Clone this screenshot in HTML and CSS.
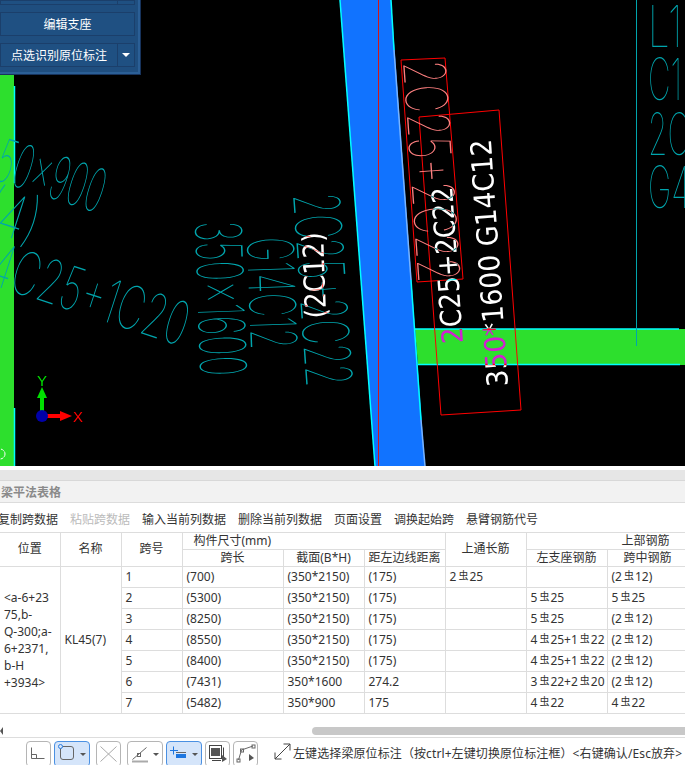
FILE: index.html
```html
<!DOCTYPE html>
<html lang="zh">
<head>
<meta charset="utf-8">
<title>梁平法表格</title>
<link rel="stylesheet" href="styles.css">
</head>
<body>
<div class="canvas">
  <svg class="drawing" width="685" height="466" viewBox="0 0 685 466">
    <rect class="green" x="0" y="60" width="14" height="406"/>
    <polygon class="green" points="415,329 685,329 685,365 418,365"/>
    <polygon class="beam" points="340,0 391,0 425,466 375,466"/>
    <line class="edge-cyan" x1="340" y1="0" x2="375" y2="466"/>
    <line class="edge-cyan" x1="391" y1="0" x2="394" y2="50"/>
    <line class="edge-light" x1="394" y1="50" x2="411" y2="280"/>
    <line class="edge-cyan" x1="411" y1="280" x2="421" y2="420"/>
    <line class="edge-light" x1="421" y1="420" x2="425" y2="466"/>
    <line class="red-line" x1="378.500" y1="0" x2="378.500" y2="466"/>
    <line class="edge-cyan" x1="14.500" y1="86" x2="14.500" y2="183"/>
    <line class="edge-cyan" x1="14.500" y1="408" x2="14.500" y2="466"/>
    <line class="edge-cyan" x1="415" y1="329" x2="679" y2="329"/>
    <line class="edge-cyan" x1="418" y1="364.500" x2="680" y2="364.500"/>
    <line class="cad-line" x1="636.500" y1="0" x2="636.500" y2="346"/>

    <text class="cad" font-size="58" x="648" y="47" textLength="34" lengthAdjust="spacingAndGlyphs">L1</text>
    <text class="cad" font-size="58" x="648" y="100" textLength="34" lengthAdjust="spacingAndGlyphs">C1</text>
    <text class="cad" font-size="58" x="648" y="155" textLength="42" lengthAdjust="spacingAndGlyphs">2C</text>
    <text class="cad" font-size="58" x="648" y="208" textLength="42" lengthAdjust="spacingAndGlyphs">G4</text>

    <text class="cad" font-size="60" transform="translate(-26,173) rotate(18)" textLength="130" lengthAdjust="spacingAndGlyphs">350x900</text>
    <text class="cad" font-size="60" transform="translate(-20,228) rotate(18)" textLength="55" lengthAdjust="spacingAndGlyphs">(4)</text>
    <text class="cad" font-size="60" transform="translate(-14,283) rotate(18)" textLength="205" lengthAdjust="spacingAndGlyphs">4C25+1C20</text>

    <text class="cad" font-size="64" transform="translate(195,222) rotate(88)" textLength="155" lengthAdjust="spacingAndGlyphs">350x1600</text>
    <text class="cad" font-size="64" transform="translate(247,238) rotate(88)" textLength="112" lengthAdjust="spacingAndGlyphs">G14C12</text>
    <text class="cad" font-size="64" transform="translate(293,195) rotate(86)" textLength="193" lengthAdjust="spacingAndGlyphs">2C25+2C22</text>

    <polygon class="box" points="401,60 445,58 463,279 417,282"/>
    <polygon class="box" points="419,117 499,110 521,410 441,415"/>
    <text class="cad cad-pink" font-size="58" transform="translate(403,62) rotate(86)" textLength="222" lengthAdjust="spacingAndGlyphs">2C25+2C22</text>

    <text class="note" font-size="29" transform="translate(326,318) rotate(-92)" textLength="86" lengthAdjust="spacingAndGlyphs">(2C12)</text>
    <text class="note" font-size="29" transform="translate(463,343) rotate(-94)" textLength="157" lengthAdjust="spacingAndGlyphs">2C25+2C22</text>
    <text class="note" font-size="29" transform="translate(508,386) rotate(-94)" textLength="248" lengthAdjust="spacingAndGlyphs">350*1600 G14C12</text>

    <rect class="axis-y" x="40" y="396" width="4" height="20"/>
    <polygon class="axis-y" points="42,387 47,398 37,398"/>
    <rect class="axis-x" x="42" y="414" width="20" height="4"/>
    <polygon class="axis-x" points="72,416 60,411 60,421"/>
    <circle class="axis-o" cx="42" cy="416" r="6"/>
    <text class="axis-label-y" font-size="15" x="37" y="386">Y</text>
    <text class="axis-label-x" font-size="15" x="73" y="422">X</text>
    <circle class="snap" cx="0" cy="454" r="5"/>
  </svg>

  <div class="panel">
    <div class="panel-row panel-stub"><span class="panel-btn"></span><span class="panel-drop"></span></div>
    <div class="panel-row"><span class="panel-btn panel-wide">编辑支座</span></div>
    <div class="panel-row"><span class="panel-btn">点选识别原位标注</span><span class="panel-drop"><i class="caret-white"></i></span></div>
  </div>
</div>

<div class="sheet">
  <div class="band"></div>
  <div class="title">梁平法表格</div>
  <div class="tools">
    <span>复制跨数据</span>
    <span class="off">粘贴跨数据</span>
    <span>输入当前列数据</span>
    <span>删除当前列数据</span>
    <span>页面设置</span>
    <span>调换起始跨</span>
    <span>悬臂钢筋代号</span>
  </div>

  <div class="table-wrap">
    <table class="grid">
      <colgroup>
        <col class="c60"><col class="c61"><col class="c61"><col class="c101"><col class="c81"><col class="c81"><col class="c81"><col class="c81"><col class="c81"><col class="c77">
      </colgroup>
      <thead>
        <tr>
          <th rowspan="2">位置</th>
          <th rowspan="2">名称</th>
          <th rowspan="2">跨号</th>
          <th colspan="3" class="th-left">构件尺寸(mm)</th>
          <th rowspan="2">上通长筋</th>
          <th colspan="3">上部钢筋</th>
        </tr>
        <tr>
          <th>跨长</th>
          <th>截面(B*H)</th>
          <th>距左边线距离</th>
          <th>左支座钢筋</th>
          <th>跨中钢筋</th>
          <th>右支座钢筋</th>
        </tr>
      </thead>
      <tbody>
        <tr><td rowspan="7" class="pos">&lt;a-6+23<br>75,b-<br>Q-300;a-<br>6+2371,<br>b-H<br>+3934&gt;</td><td rowspan="7">KL45(7)</td><td>1</td><td>(700)</td><td>(350*2150)</td><td>(175)</td><td>2<b class="rb">虫</b>25</td><td></td><td>(2<b class="rb">虫</b>12)</td><td></td></tr>
        <tr><td>2</td><td>(5300)</td><td>(350*2150)</td><td>(175)</td><td></td><td>5<b class="rb">虫</b>25</td><td>5<b class="rb">虫</b>25</td><td></td></tr>
        <tr><td>3</td><td>(8250)</td><td>(350*2150)</td><td>(175)</td><td></td><td>5<b class="rb">虫</b>25</td><td>(2<b class="rb">虫</b>12)</td><td></td></tr>
        <tr><td>4</td><td>(8550)</td><td>(350*2150)</td><td>(175)</td><td></td><td>4<b class="rb">虫</b>25+1<b class="rb">虫</b>22</td><td>(2<b class="rb">虫</b>12)</td><td></td></tr>
        <tr><td>5</td><td>(8400)</td><td>(350*2150)</td><td>(175)</td><td></td><td>4<b class="rb">虫</b>25+1<b class="rb">虫</b>22</td><td>(2<b class="rb">虫</b>12)</td><td></td></tr>
        <tr><td>6</td><td>(7431)</td><td>350*1600</td><td>274.2</td><td></td><td>3<b class="rb">虫</b>22+2<b class="rb">虫</b>20</td><td>(2<b class="rb">虫</b>12)</td><td></td></tr>
        <tr><td>7</td><td>(5482)</td><td>350*900</td><td>175</td><td></td><td>4<b class="rb">虫</b>22</td><td>4<b class="rb">虫</b>22</td><td></td></tr>
      </tbody>
    </table>
  </div>

  <div class="scrollbar"><i class="scroll-left"></i><i class="scroll-thumb"></i></div>

  <div class="status">
    <span class="sb">
      <svg width="23" height="24" viewBox="0 0 23 24"><path class="ic" d="M4.500 5.500V16.500H17.500M4.500 12.500H9.500V16.500"/></svg>
    </span>
    <span class="sb sb-wide sb-on">
      <svg width="23" height="24" viewBox="0 0 23 24"><rect class="ic" x="5.500" y="4.500" width="13" height="13" rx="2.500"/><circle class="ic-blue" cx="5.500" cy="4.500" r="2"/></svg>
      <i class="caret"></i>
    </span>
    <span class="sb sb-off">
      <svg width="23" height="24" viewBox="0 0 23 24"><path class="ic-gray" d="M3.500 4.500L19.500 19.500M19.500 4.500L3.500 19.500"/></svg>
    </span>
    <span class="sb sb-wide">
      <svg width="23" height="24" viewBox="0 0 23 24"><path class="ic" d="M4.500 17.500L18.500 5.500"/><rect class="ic" x="9.500" y="11.500" width="3" height="3"/><path class="ic-bar" d="M4 19.500H20"/></svg>
      <i class="caret"></i>
    </span>
    <span class="sb sb-wide sb-on">
      <svg width="23" height="24" viewBox="0 0 23 24"><path class="ic-blue-line" d="M3 8.500H11M6.500 4.500V12.500"/><rect class="ic-blue-fill" x="9" y="12" width="10" height="4"/><path class="ic" d="M9 10.500H19"/></svg>
      <i class="caret"></i>
    </span>
    <span class="sb">
      <svg width="23" height="24" viewBox="0 0 23 24"><rect class="ic-dark" x="3.500" y="3.500" width="12" height="13"/><rect class="ic-dark-fill" x="5" y="6" width="9" height="8"/><path class="ic-dark" d="M17.500 5.500V16M6 18.500H15"/><polygon class="ic-tri" points="16,13 21,17 16,20"/></svg>
    </span>
    <span class="sb">
      <svg width="23" height="24" viewBox="0 0 23 24"><path class="ic" d="M4.500 18L7.500 8L19 4"/><rect class="ic" x="3" y="17" width="3" height="3"/><rect class="ic" x="6.500" y="7" width="3" height="3"/><rect class="ic" x="18" y="3" width="3" height="3"/><polygon class="ic-tri" points="15,12 20,16 15,19"/></svg>
    </span>
    <svg class="expand" width="17" height="17" viewBox="0 0 17 17"><path class="ic-dark" d="M1 16L16 1M9.500 1H16V7.500M1 9.500V16H7.500"/></svg>
    <span class="hint">左键选择梁原位标注（按ctrl+左键切换原位标注框）&lt;右键确认/Esc放弃&gt;</span>
  </div>
</div>
</body>
</html>
```
FILE: styles.css
```css
* { box-sizing: border-box; }
html, body { margin: 0; padding: 0; height: 765px; overflow: hidden; background: #fff; }
body { width: 685px; font-family: "Noto Sans", "Noto Sans CJK SC", sans-serif; font-size: 12px; color: #333; }

/* CAD canvas */
.canvas { position: relative; height: 466px; background: #000; overflow: hidden; isolation: isolate; }
.drawing { display: block; }
.green { fill: #2ddf2d; }
.beam { fill: #1173ff; }
.edge-cyan { stroke: #00ffff; stroke-width: 1.5; fill: none; }
.edge-light { stroke: #78b4ff; stroke-width: 1.5; fill: none; }
.red-line { stroke: #d01818; stroke-width: 1; }
.cad-line { stroke: #00a5ad; stroke-width: 1; }
.cad { font-family: Inter, "Noto Sans", sans-serif; font-weight: 100; fill: #00a5ad; }
.cad-pink { fill: #ff8080; }
.box { fill: none; stroke: #ff0000; stroke-width: 1; }
.note { font-family: "DejaVu Sans", sans-serif; fill: #fff; mix-blend-mode: difference; }
.axis-y { fill: #00e000; }
.axis-x { fill: #ff0000; }
.axis-o { fill: #0000a8; }
.axis-label-y { font-family: "Liberation Sans", sans-serif; fill: #00e000; }
.axis-label-x { font-family: "Liberation Sans", sans-serif; fill: #ff0000; }
.snap { fill: none; stroke: #fff; stroke-width: 1; stroke-dasharray: 3 1; }

/* floating panel */
.panel { position: absolute; left: 0; top: 0; width: 141px; height: 75px; background: #1f4e7f; border-right: 1px solid #17335c; border-bottom: 1px solid #17335c; box-shadow: inset -2px -2px 0 #2b5f96; display: flex; flex-direction: column; gap: 7px; padding-bottom: 7px; }
.panel-row { display: flex; height: 26px; width: 135px; }
.panel-stub { height: 5px; }
.panel-btn { flex: 1; display: flex; align-items: center; justify-content: center; background: #1f5082; border: 1px solid #1b3f6b; color: #fff; font-size: 12px; }
.panel-drop { width: 17px; display: flex; align-items: center; justify-content: center; background: #1f5082; border: 1px solid #1b3f6b; border-left: 0; }
.caret-white { width: 0; height: 0; border-left: 4px solid transparent; border-right: 4px solid transparent; border-top: 4px solid #fff; }

/* lower sheet */
.sheet { background: #fff; height: 299px; padding-top: 4px; overflow: hidden; }
.band { height: 11px; background: #e6e6e6; border-bottom: 1px solid #d8d8d8; }
.title { height: 22px; background: #f2f2f2; border-bottom: 1px solid #dcdcdc; padding-left: 1px; font-weight: 700; color: #8a8a8a; line-height: 24px; }
.tools { height: 29px; display: flex; gap: 12px; align-items: center; margin-left: -2px; padding-top: 2px; white-space: nowrap; }
.off { color: #bbb; }

.table-wrap { height: 193px; overflow: hidden; border-top: 1px solid #ddd; }
.grid { border-collapse: collapse; table-layout: fixed; width: 761px; }
.c60 { width: 60px; }
.c61 { width: 61px; }
.c77 { width: 77px; }
.c101 { width: 101px; }
.c81 { width: 81px; }
.grid th, .grid td { border: 1px solid #ddd; padding: 0; line-height: 14px; white-space: nowrap; overflow: hidden; }
.grid th { font-weight: 400; height: 17px; text-align: center; }
.grid tr:first-child th { border-top: 0; height: 16px; }
.grid th:first-child, .grid td:first-child { border-left: 0; }
.grid .th-left { text-align: left; padding-left: 11px; }
.grid td { height: 21px; padding-left: 4px; }
.grid .pos { line-height: 17px; padding-left: 4px; }
.rb { font-size: 10px; font-weight: 400; margin: 0 1px 0 2px; vertical-align: 2px; line-height: 1; }

.scrollbar { height: 12px; display: flex; align-items: center; }
.scroll-left { width: 0; height: 0; border-top: 4px solid transparent; border-bottom: 4px solid transparent; border-right: 3px solid #555; }
.scroll-thumb { margin-left: 309px; flex: 1; height: 8px; background: #c8c8c8; border-radius: 4px 0 0 4px; }

.status { height: 28px; border-top: 1px solid #ddd; display: flex; align-items: flex-start; padding: 3px 0 0 26px; white-space: nowrap; overflow: hidden; }
.sb { flex: none; width: 25px; height: 26px; margin-right: 3px; border: 1px solid #b5b5b5; border-radius: 4px; background: #fff; display: flex; align-items: center; justify-content: flex-start; }
.sb-wide { width: 36px; }
.sb-on { background: #d5e5fa; border-color: #4a90e2; }
.sb-off { margin-left: 3px; margin-right: 6px; }
.sb svg { flex: none; }
.caret { width: 0; height: 0; margin-left: 2px; border-left: 3px solid transparent; border-right: 3px solid transparent; border-top: 3px solid #555; }
.ic { fill: none; stroke: #666; stroke-width: 1; }
.ic-gray { fill: none; stroke: #aaa; stroke-width: 1; }
.ic-blue { fill: #d5e5fa; stroke: #2b7de0; stroke-width: 1; }
.ic-blue-line { fill: none; stroke: #1d76e0; stroke-width: 1; }
.ic-blue-fill { fill: #1d76e0; }
.ic-bar { fill: none; stroke: #aaa; stroke-width: 2; }
.ic-dark { fill: none; stroke: #444; stroke-width: 1; }
.ic-dark-fill { fill: #555; }
.ic-tri { fill: #555; }
.expand { flex: none; margin: 2px 2px 0 13px; }
.hint { line-height: 26px; letter-spacing: 0.1px; }
```
